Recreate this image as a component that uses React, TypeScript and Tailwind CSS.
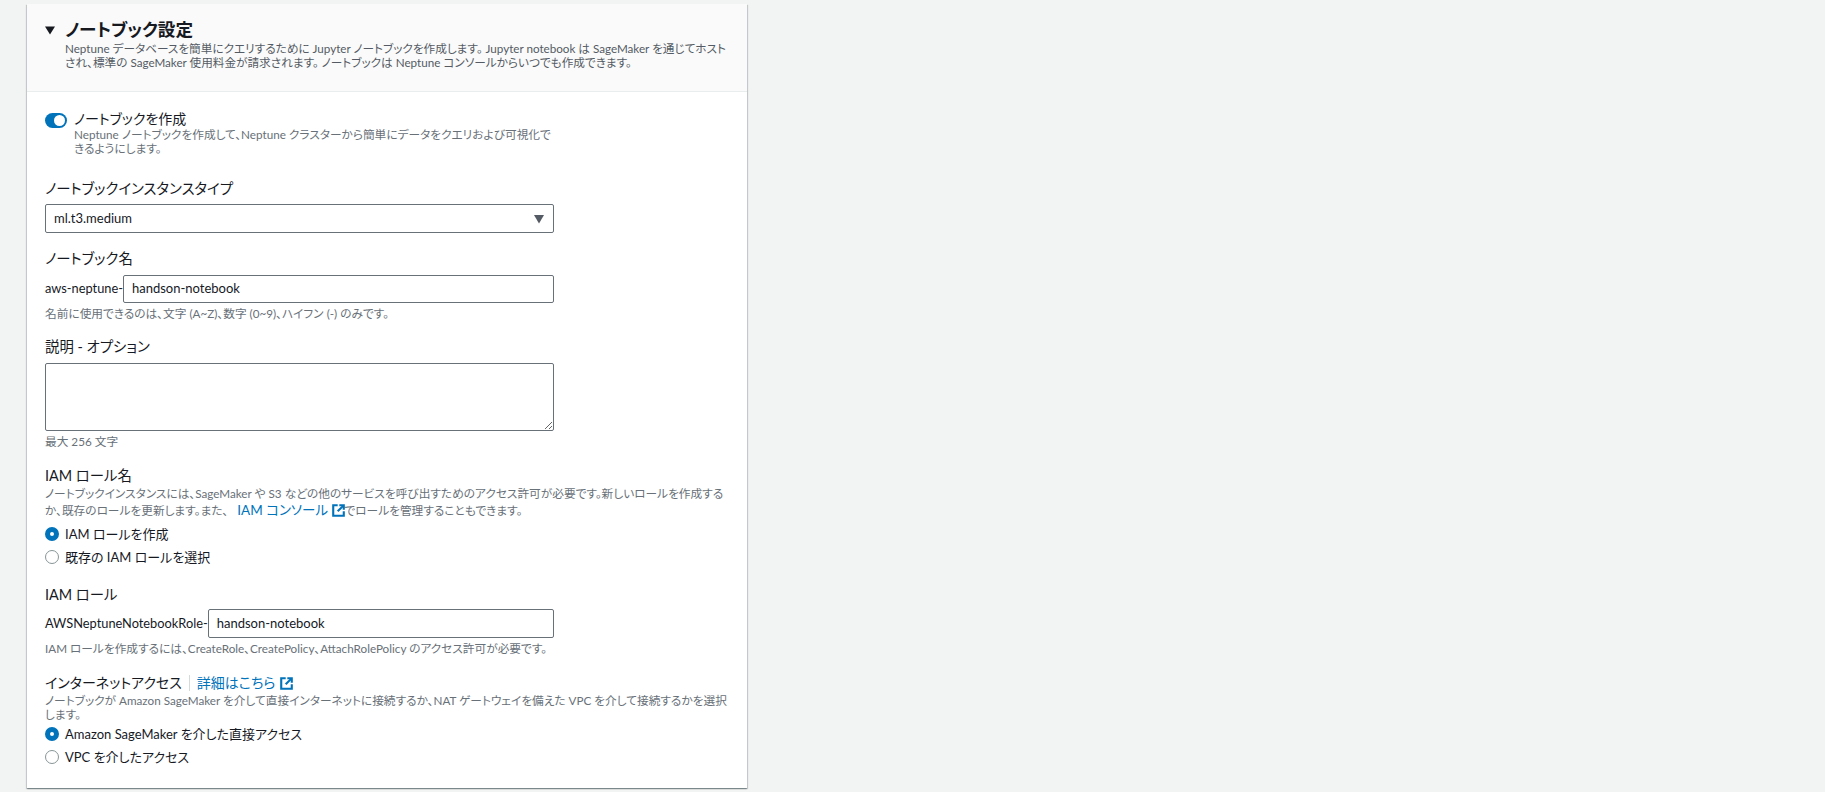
import type { ReactNode } from 'react';

function Hint({ children, className = '' }: { children: ReactNode; className?: string }) {
	return <p className={`whitespace-nowrap text-[11.7px] leading-[14px] text-[#687078] ${className}`}>{children}</p>;
}

function Label({ children, className = '' }: { children: ReactNode; className?: string }) {
	return <p className={`text-[14.4px] leading-[20px] text-[#16191f] ${className}`}>{children}</p>;
}

function Radio({ checked, label, className = '' }: { checked?: boolean; label: string; className?: string }) {
	return (
		<div className={`flex h-[20px] items-center gap-[6px] ${className}`}>
			{checked ? (
				<span className="size-[14px] rounded-full border-[5px] border-[#0073bb] bg-white" />
			) : (
				<span className="size-[14px] rounded-full border-[1.5px] border-[#879596] bg-white" />
			)}
			<span className="text-[13px] leading-[20px] text-[#16191f]">{label}</span>
		</div>
	);
}

function ExternalIcon() {
	return (
		<svg viewBox="0 0 16 16" className="inline-block size-[13px] align-[-2px]" fill="none" stroke="#0073bb" strokeWidth="2.6">
			<path d="M14.5 9v5.5h-13v-13H7" />
			<path d="M9 1.5h5.5V7" />
			<path d="M14 2 7 9" />
		</svg>
	);
}

function PrefixInput({ prefix, value, height }: { prefix: string; value: string; height: string }) {
	return (
		<div className="flex w-[509px] items-center">
			<span className="text-[12.8px] text-[#16191f]">{prefix}</span>
			<div className={`flex flex-1 items-center rounded-[2px] border border-[#687078] pl-[8px] text-[13px] text-[#16191f] ${height}`}>
				{value}
			</div>
		</div>
	);
}

export default function App() {
	return (
		<div className="min-h-[792px] overflow-hidden bg-[#f2f3f3] pt-[4px] pl-[27px] font-['Lato','Noto_Sans_CJK_JP',sans-serif] [font-feature-settings:'palt']">
			<section className="h-[784px] w-[720px] bg-white shadow-[0_1px_1px_0_rgba(0,28,36,0.3),1px_1px_1px_0_rgba(0,28,36,0.15),-1px_1px_1px_0_rgba(0,28,36,0.15)]">
				<header className="h-[88px] border-b border-[#eaeded] bg-[#fafafa] pt-[15px] pr-[20px] pl-[18px]">
					<div className="flex items-center gap-[10px]">
						<svg viewBox="0 0 10 10" className="size-[10px]">
							<path d="M0 1.5h10L5 9.5z" fill="#16191f" />
						</svg>
						<h2 className="text-[17.6px] leading-[22px] font-bold text-[#16191f]">ノートブック設定</h2>
					</div>
					<p className="mt-[1px] ml-[20px] whitespace-nowrap text-[11.65px] leading-[14px] text-[#545b64]">
						Neptune データベースを簡単にクエリするために Jupyter ノートブックを作成します。 Jupyter notebook は SageMaker を通じてホスト
						<br />
						され、標準の SageMaker 使用料金が請求されます。 ノートブックは Neptune コンソールからいつでも作成できます。
					</p>
				</header>

				<div className="px-[18px] pt-[19px]">
					<div className="flex w-[509px] gap-[7px]">
						<span className="mt-[2px] flex h-[15px] w-[22px] shrink-0 items-center justify-end rounded-full bg-[#0073bb] pr-[2px]">
							<span className="size-[11px] rounded-full bg-white" />
						</span>
						<div>
							<p className="text-[14px] leading-[16px] text-[#16191f]">ノートブックを作成</p>
							<Hint>
								Neptune ノートブックを作成して、Neptune クラスターから簡単にデータをクエリおよび可視化で
								<br />
								きるようにします。
							</Hint>
						</div>
					</div>

					<Label className="mt-[24px]">ノートブックインスタンスタイプ</Label>
					<div className="mt-[5px] flex h-[29px] w-[509px] items-center justify-between rounded-[2px] border border-[#687078] pr-[9px] pl-[8px] text-[13px] text-[#16191f]">
						ml.t3.medium
						<svg viewBox="0 0 10 10" className="size-[10px]">
							<path d="M0 1h10L5 9.5z" fill="#545b64" />
						</svg>
					</div>

					<Label className="mt-[16px]">ノートブック名</Label>
					<div className="mt-[6px]">
						<PrefixInput prefix="aws-neptune-" value="handson-notebook" height="h-[28px]" />
					</div>
					<Hint className="mt-[3px]">名前に使用できるのは、文字 (A~Z)、数字 (0~9)、ハイフン (-) のみです。</Hint>

					<Label className="mt-[17px]">説明 - オプション</Label>
					<textarea
						readOnly
						className="mt-[6px] block h-[68px] w-[509px] rounded-[2px] border border-[#687078]"
					/>
					<Hint className="mt-[3px]">最大 256 文字</Hint>

					<Label className="mt-[18px]">IAM ロール名</Label>
					<Hint className="mt-[-1px] leading-[17px]!">
						ノートブックインスタンスには、SageMaker や S3 などの他のサービスを呼び出すためのアクセス許可が必要です。新しいロールを作成する
						<br />
						か、既存のロールを更新します。また、
						<span className="ml-[9px] text-[13.5px] text-[#0073bb]">IAM コンソール </span>
						<ExternalIcon />
						でロールを管理することもできます。
					</Hint>
					<Radio checked label="IAM ロールを作成" className="mt-[5px]" />
					<Radio label="既存の IAM ロールを選択" className="mt-[3px]" />

					<Label className="mt-[18px]">IAM ロール</Label>
					<div className="mt-[4px]">
						<PrefixInput prefix="AWSNeptuneNotebookRole-" value="handson-notebook" height="h-[29px]" />
					</div>
					<Hint className="mt-[3px]">IAM ロールを作成するには、CreateRole、CreatePolicy、AttachRolePolicy のアクセス許可が必要です。</Hint>

					<div className="mt-[18px] flex items-center text-[14px] leading-[20px]">
						<span className="text-[#16191f]">インターネットアクセス</span>
						<span className="mx-[7px] h-[16px] w-px bg-[#d5dbdb]" />
						<span className="text-[#0073bb]">詳細はこちら</span>
						<span className="ml-[5px] flex">
							<ExternalIcon />
						</span>
					</div>
					<Hint>
						ノートブックが Amazon SageMaker を介して直接インターネットに接続するか、NAT ゲートウェイを備えた VPC を介して接続するかを選択
						<br />
						します。
					</Hint>
					<Radio checked label="Amazon SageMaker を介した直接アクセス" className="mt-[3px]" />
					<Radio label="VPC を介したアクセス" className="mt-[3px]" />
				</div>
			</section>
		</div>
	);
}
